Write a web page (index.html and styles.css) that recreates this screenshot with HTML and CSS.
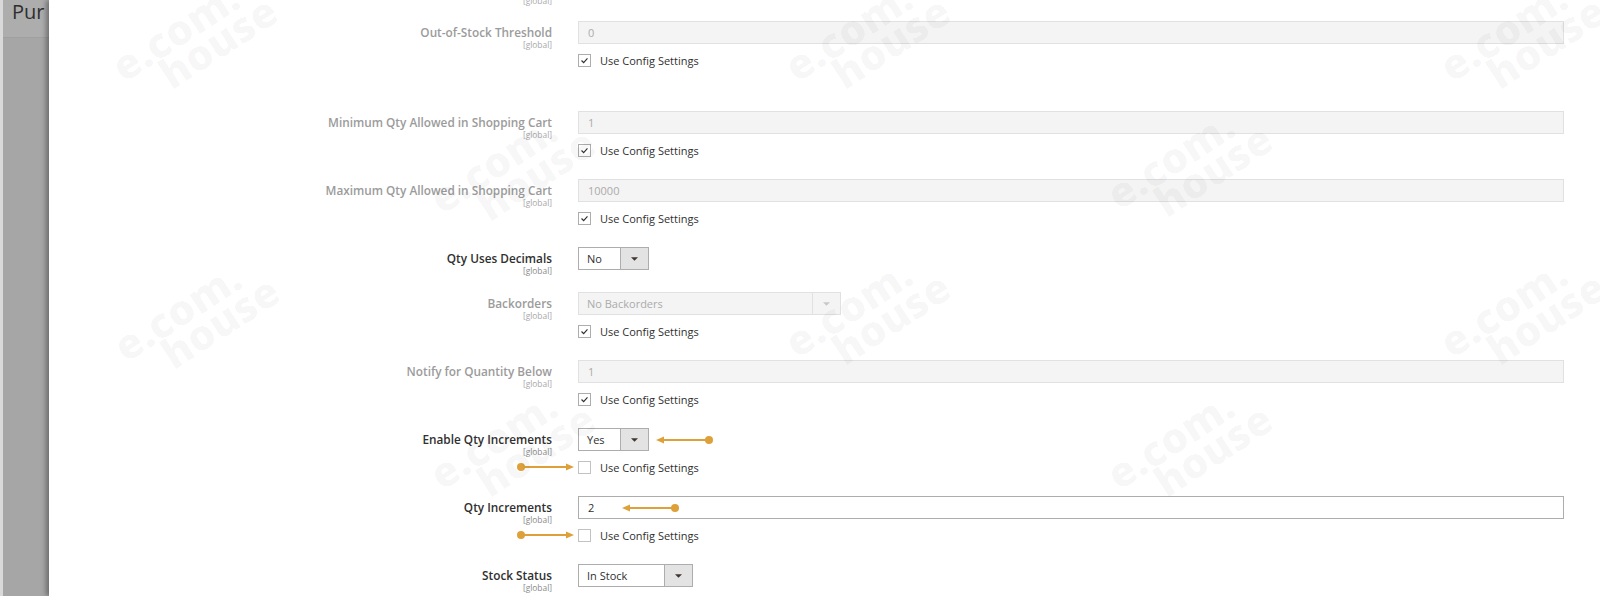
FILE: index.html
```html
<!DOCTYPE html>
<html lang="en">
<head>
<meta charset="utf-8">
<title>Advanced Inventory</title>
<link rel="stylesheet" href="styles.css">
</head>
<body>
<div class="page">
  <aside class="backdrop">
    <div class="backdrop-head"><span class="page-title">Pur</span></div>
  </aside>
  <main class="modal">
    <div class="form">
      <div class="ghost"><span class="scope">[global]</span></div>

      <div class="field field-spaced is-disabled">
        <div class="label"><span class="label-text">Out-of-Stock Threshold</span><span class="scope">[global]</span></div>
        <div class="control">
          <div class="input disabled">0</div>
          <div class="check"><span class="box"><svg viewBox="0 0 13 13"><polyline points="3,6.5 5.5,9 10,4"/></svg></span>Use Config Settings</div>
        </div>
      </div>

      <div class="field is-disabled">
        <div class="label"><span class="label-text">Minimum Qty Allowed in Shopping Cart</span><span class="scope">[global]</span></div>
        <div class="control">
          <div class="input disabled">1</div>
          <div class="check"><span class="box"><svg viewBox="0 0 13 13"><polyline points="3,6.5 5.5,9 10,4"/></svg></span>Use Config Settings</div>
        </div>
      </div>

      <div class="field is-disabled">
        <div class="label"><span class="label-text">Maximum Qty Allowed in Shopping Cart</span><span class="scope">[global]</span></div>
        <div class="control">
          <div class="input disabled">10000</div>
          <div class="check"><span class="box"><svg viewBox="0 0 13 13"><polyline points="3,6.5 5.5,9 10,4"/></svg></span>Use Config Settings</div>
        </div>
      </div>

      <div class="field field-nocheck">
        <div class="label"><span class="label-text">Qty Uses Decimals</span><span class="scope">[global]</span></div>
        <div class="control">
          <div class="select select-small"><span class="select-value">No</span><span class="select-arrow"><svg viewBox="0 0 8 4"><polygon points="0,0 8,0 4,4"/></svg></span></div>
        </div>
      </div>

      <div class="field is-disabled">
        <div class="label"><span class="label-text">Backorders</span><span class="scope">[global]</span></div>
        <div class="control">
          <div class="select select-wide disabled"><span class="select-value">No Backorders</span><span class="select-arrow"><svg viewBox="0 0 8 4"><polygon points="0,0 8,0 4,4"/></svg></span></div>
          <div class="check"><span class="box"><svg viewBox="0 0 13 13"><polyline points="3,6.5 5.5,9 10,4"/></svg></span>Use Config Settings</div>
        </div>
      </div>

      <div class="field is-disabled">
        <div class="label"><span class="label-text">Notify for Quantity Below</span><span class="scope">[global]</span></div>
        <div class="control">
          <div class="input disabled">1</div>
          <div class="check"><span class="box"><svg viewBox="0 0 13 13"><polyline points="3,6.5 5.5,9 10,4"/></svg></span>Use Config Settings</div>
        </div>
      </div>

      <div class="field">
        <div class="label"><span class="label-text">Enable Qty Increments</span><span class="scope">[global]</span></div>
        <div class="control">
          <div class="select-row">
            <div class="select select-small"><span class="select-value">Yes</span><span class="select-arrow"><svg viewBox="0 0 8 4"><polygon points="0,0 8,0 4,4"/></svg></span></div>
            <svg class="arrow arrow-left" viewBox="0 0 58 10"><line x1="6" y1="5" x2="53" y2="5"/><polygon points="0,5 8,1.5 8,8.5"/><circle cx="53" cy="5" r="4"/></svg>
          </div>
          <div class="check unchecked">
            <svg class="arrow arrow-right" viewBox="0 0 58 10"><line x1="5" y1="5" x2="52" y2="5"/><polygon points="58,5 50,1.5 50,8.5"/><circle cx="5" cy="5" r="4"/></svg>
            <span class="box"></span>Use Config Settings
          </div>
        </div>
      </div>

      <div class="field">
        <div class="label"><span class="label-text">Qty Increments</span><span class="scope">[global]</span></div>
        <div class="control">
          <div class="input enabled">2
            <svg class="arrow arrow-in-input" viewBox="0 0 58 10"><line x1="6" y1="5" x2="53" y2="5"/><polygon points="0,5 8,1.5 8,8.5"/><circle cx="53" cy="5" r="4"/></svg>
          </div>
          <div class="check unchecked">
            <svg class="arrow arrow-right" viewBox="0 0 58 10"><line x1="5" y1="5" x2="52" y2="5"/><polygon points="58,5 50,1.5 50,8.5"/><circle cx="5" cy="5" r="4"/></svg>
            <span class="box"></span>Use Config Settings
          </div>
        </div>
      </div>

      <div class="field field-nocheck">
        <div class="label"><span class="label-text">Stock Status</span><span class="scope">[global]</span></div>
        <div class="control">
          <div class="select select-medium"><span class="select-value">In Stock</span><span class="select-arrow"><svg viewBox="0 0 8 4"><polygon points="0,0 8,0 4,4"/></svg></span></div>
        </div>
      </div>
    </div>
  </main>
</div>
<div class="watermarks" aria-hidden="true">
  <div class="wm wm-1"><span>e.com.</span><span class="wm-2nd">house</span></div>
  <div class="wm wm-2"><span>e.com.</span><span class="wm-2nd">house</span></div>
  <div class="wm wm-3"><span>e.com.</span><span class="wm-2nd">house</span></div>
  <div class="wm wm-4"><span>e.com.</span><span class="wm-2nd">house</span></div>
  <div class="wm wm-5"><span>e.com.</span><span class="wm-2nd">house</span></div>
  <div class="wm wm-6"><span>e.com.</span><span class="wm-2nd">house</span></div>
  <div class="wm wm-7"><span>e.com.</span><span class="wm-2nd">house</span></div>
  <div class="wm wm-8"><span>e.com.</span><span class="wm-2nd">house</span></div>
  <div class="wm wm-9"><span>e.com.</span><span class="wm-2nd">house</span></div>
  <div class="wm wm-10"><span>e.com.</span><span class="wm-2nd">house</span></div>
</div>
</body>
</html>
```

FILE: styles.css
```css
html, body {
  margin: 0;
  padding: 0;
  background: #fff;
}

body {
  font-family: "Open Sans", "Liberation Sans", sans-serif;
  color: #303030;
  width: 1600px;
  height: 596px;
  overflow: hidden;
  position: relative;
}

.page {
  display: flex;
  height: 596px;
  overflow: hidden;
}

/* backdrop (page behind the slide-in modal) */
.backdrop {
  flex: none;
  width: 46px;
  background: #a6a6a6;
  border-left: 3px solid #d9d9d9;
  overflow: hidden;
}

.backdrop-head {
  height: 37px;
  background: #adadad;
  border-bottom: 1px solid #a0a0a0;
  overflow: hidden;
}

.page-title {
  display: block;
  padding-left: 9px;
  font-size: 20px;
  line-height: 24px;
  color: #2f2f2f;
  white-space: nowrap;
}

/* modal */
.modal {
  flex: 1;
  position: relative;
  background: #fff;
  box-shadow: -3px 0 5px rgba(0, 0, 0, 0.35);
  overflow: hidden;
}

.form {
  display: flex;
  flex-direction: column;
}

.ghost {
  height: 8px;
  margin-top: -4px;
  margin-bottom: 17px;
  width: 503px;
  display: flex;
  justify-content: flex-end;
}

.field {
  display: grid;
  grid-template-columns: 503px 1fr;
  align-items: start;
  column-gap: 26px;
  padding-right: 36px;
  margin-bottom: 22px;
}

.field-spaced {
  margin-bottom: 44px;
}

.field-nocheck {
  margin-bottom: 22px;
}

.label {
  height: 23px;
  display: flex;
  flex-direction: column;
  align-items: flex-end;
}

.label-text {
  font-size: 11.8px;
  font-weight: 600;
  line-height: 23px;
  color: #303030;
  white-space: nowrap;
}

.scope {
  font-size: 8.4px;
  line-height: 9px;
  margin-top: -4px;
  color: #8a8a8a;
}

.ghost .scope {
  margin-top: 0;
  color: #aaa;
}

.is-disabled .label-text {
  color: #9b9b9b;
}

.is-disabled .scope {
  color: #a8a8a8;
}

.control {
  display: flex;
  flex-direction: column;
  align-items: flex-start;
  position: relative;
}

/* inputs */
.input {
  box-sizing: border-box;
  width: 100%;
  height: 23px;
  padding-left: 9px;
  font-size: 11px;
  line-height: 21px;
  position: relative;
}

.input.disabled {
  background: #f4f4f4;
  border: 1px solid #e1e1e1;
  color: #ababab;
}

.input.enabled {
  background: #fff;
  border: 1px solid #adadad;
  color: #303030;
}

/* selects */
.select-row {
  display: flex;
  align-items: center;
}

.select {
  box-sizing: border-box;
  height: 23px;
  display: flex;
  background: #fff;
  border: 1px solid #adadad;
  font-size: 11px;
  line-height: 21px;
  color: #303030;
}

.select-small { width: 71px; }
.select-medium { width: 115px; }
.select-wide { width: 263px; }

.select-value {
  flex: 1;
  padding-left: 8px;
}

.select-arrow {
  flex: none;
  width: 27px;
  background: #e3e3e3;
  border-left: 1px solid #adadad;
  display: flex;
  align-items: center;
  justify-content: center;
}

.select-arrow svg {
  width: 7px;
  height: 4px;
  fill: #41362f;
}

.select.disabled {
  background: #f4f4f4;
  border-color: #e1e1e1;
  color: #ababab;
}

.select.disabled .select-arrow {
  background: #f4f4f4;
  border-left-color: #e1e1e1;
}

.select.disabled .select-arrow svg {
  fill: #c8c8c8;
}

/* checkbox rows */
.check {
  margin-top: 10px;
  display: flex;
  align-items: center;
  height: 13px;
  font-size: 11px;
  color: #303030;
  position: relative;
  white-space: nowrap;
}

.box {
  box-sizing: border-box;
  width: 13px;
  height: 13px;
  border: 1px solid #adadad;
  background: #fff;
  margin-right: 9px;
  display: flex;
  align-items: center;
  justify-content: center;
}

.box svg {
  width: 13px;
  height: 13px;
  fill: none;
  stroke: #303030;
  stroke-width: 1.4;
}

.unchecked .box {
  border-color: #c2c2c2;
}

/* annotation arrows */
.arrow {
  width: 58px;
  height: 10px;
  flex: none;
}

.arrow line {
  stroke: #dea13a;
  stroke-width: 1.8;
}

.arrow polygon,
.arrow circle {
  fill: #dea13a;
}

.arrow-left {
  margin-left: 7px;
}

.arrow-right {
  position: absolute;
  right: calc(100% + 4px);
  top: 1px;
}

.arrow-in-input {
  position: absolute;
  left: 43px;
  top: 6px;
}

/* watermarks */
.watermarks {
  position: absolute;
  inset: 0;
  pointer-events: none;
  overflow: hidden;
}

.wm {
  position: absolute;
  display: flex;
  flex-direction: column;
  font-family: "Open Sans", "Liberation Sans", sans-serif;
  font-weight: 800;
  font-size: 42px;
  line-height: 32px;
  color: rgba(0, 0, 0, 0.03);
  transform: translate(-50%, -50%) rotate(-33deg);
  white-space: nowrap;
}

.wm-2nd {
  padding-left: 36px;
}

.wm-1 { left: 194px; top: 38px; }
.wm-2 { left: 867px; top: 38px; }
.wm-3 { left: 1522px; top: 38px; }
.wm-4 { left: 512px; top: 170px; }
.wm-5 { left: 1189px; top: 166px; }
.wm-6 { left: 196px; top: 318px; }
.wm-7 { left: 867px; top: 314px; }
.wm-8 { left: 1522px; top: 314px; }
.wm-9 { left: 512px; top: 446px; }
.wm-10 { left: 1189px; top: 446px; }
```
